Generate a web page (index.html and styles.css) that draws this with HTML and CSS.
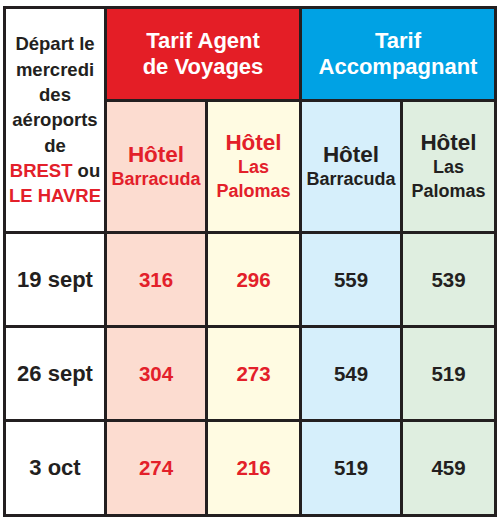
FILE: index.html
```html
<!DOCTYPE html>
<html lang="fr">
<head>
<meta charset="utf-8">
<title>Tarifs</title>
<link rel="stylesheet" href="styles.css">
</head>
<body>
<div class="grid">
  <div class="cell depart">
    <span>Départ le</span>
    <span>mercredi</span>
    <span>des</span>
    <span>aéroports</span>
    <span>de</span>
    <span><em>BREST</em> ou</span>
    <span><em>LE HAVRE</em></span>
  </div>
  <div class="cell head red-head"><span>Tarif Agent</span><span>de Voyages</span></div>
  <div class="cell head blue-head"><span>Tarif</span><span>Accompagnant</span></div>

  <div class="cell sub pink red-t"><span class="h">Hôtel</span><span class="n">Barracuda</span></div>
  <div class="cell sub yellow red-t"><span class="h">Hôtel</span><span class="n">Las</span><span class="n">Palomas</span></div>
  <div class="cell sub lblue"><span class="h">Hôtel</span><span class="n">Barracuda</span></div>
  <div class="cell sub lgreen"><span class="h">Hôtel</span><span class="n">Las</span><span class="n">Palomas</span></div>

  <div class="cell date">19 sept</div>
  <div class="cell num pink red-t">316</div>
  <div class="cell num yellow red-t">296</div>
  <div class="cell num lblue">559</div>
  <div class="cell num lgreen">539</div>

  <div class="cell date">26 sept</div>
  <div class="cell num pink red-t">304</div>
  <div class="cell num yellow red-t">273</div>
  <div class="cell num lblue">549</div>
  <div class="cell num lgreen">519</div>

  <div class="cell date">3 oct</div>
  <div class="cell num pink red-t">274</div>
  <div class="cell num yellow red-t">216</div>
  <div class="cell num lblue">519</div>
  <div class="cell num lgreen">459</div>
</div>
</body>
</html>
```

FILE: styles.css
```css
html, body {
  margin: 0;
  padding: 0;
  background: #ffffff;
}
body {
  padding: 6px 3px 0 3px;
  font-family: "Liberation Sans", Arial, sans-serif;
  font-weight: bold;
  color: #231f20;
}
.grid {
  display: grid;
  width: 488px;
  grid-template-columns: 98px 98px 91px 98px 91px;
  grid-template-rows: 90px 129px 91px 91px 92px;
  gap: 3px;
  padding: 3px;
  background: #231f20;
}
.cell {
  display: flex;
  flex-direction: column;
  align-items: center;
  justify-content: center;
  text-align: center;
  background: #ffffff;
}
.depart {
  grid-row: 1 / 3;
  font-size: 18.5px;
  line-height: 25.3px;
}
.depart span { display: block; white-space: nowrap; }
.depart em {
  font-style: normal;
  color: #e3202a;
}
.head {
  color: #ffffff;
  font-size: 22px;
  line-height: 26px;
  grid-column: span 2;
}
.head span { display: block; white-space: nowrap; }
.red-head { background: #e41e26; }
.blue-head { background: #00a2e4; }
.sub .h {
  display: block;
  font-size: 22.5px;
  line-height: 24px;
}
.sub .n {
  display: block;
  font-size: 18px;
  line-height: 24px;
}
.pink { background: #fcdcd0; }
.yellow { background: #fffbe2; }
.lblue { background: #d6effb; }
.lgreen { background: #dfeee0; }
.red-t { color: #e3202a; }
.date {
  font-size: 22px;
}
.num {
  font-size: 20.5px;
}
```
